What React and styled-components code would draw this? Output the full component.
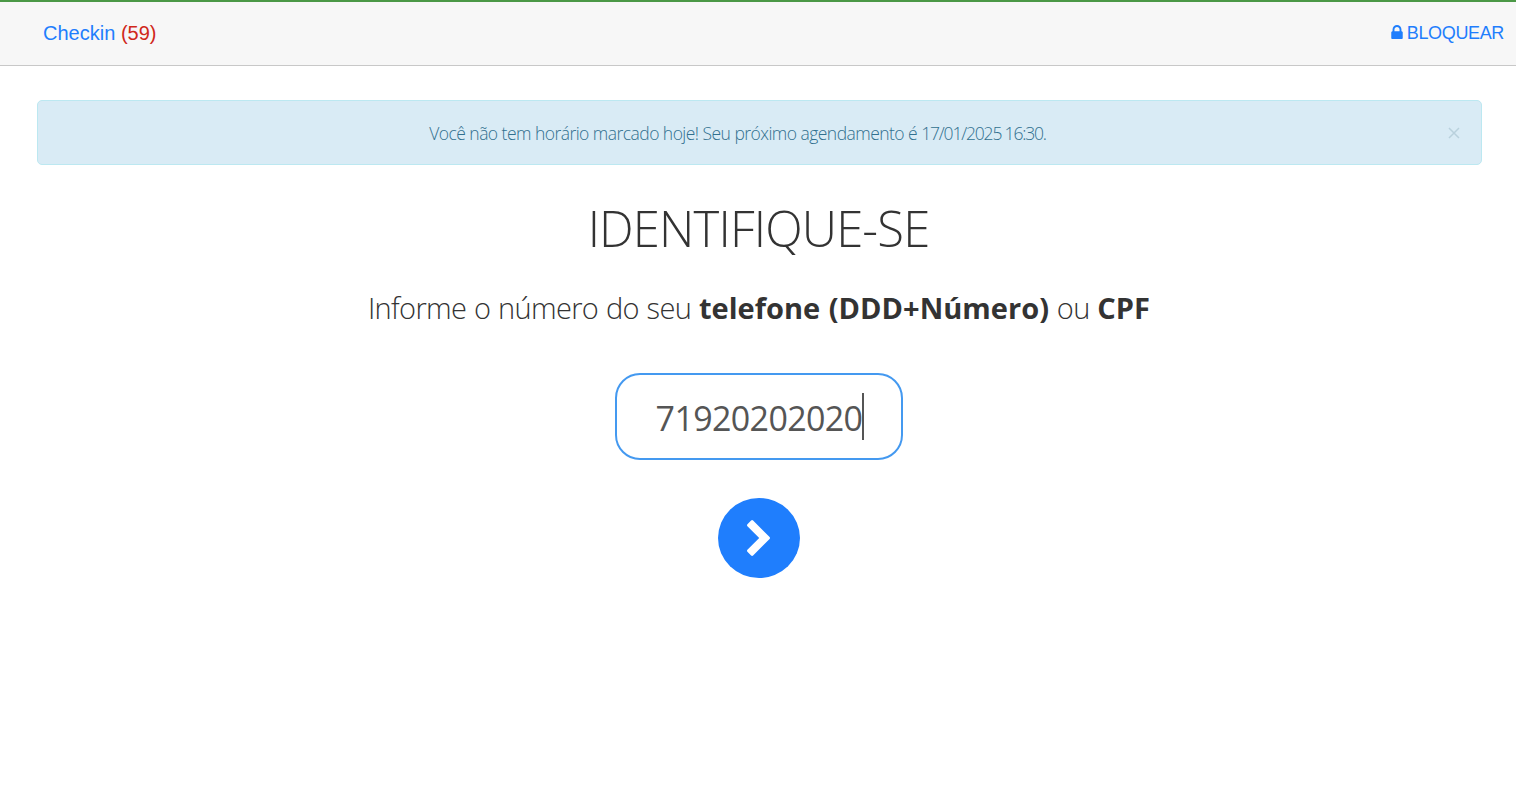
import React, { useState } from 'react';
import styled, { createGlobalStyle } from 'styled-components';

const GlobalStyle = createGlobalStyle`
  * {
    box-sizing: border-box;
  }

  body {
    margin: 0;
    background-color: #fff;
    color: #333;
    font-family: 'Open Sans', 'Noto Sans', sans-serif;
    font-weight: 300;
  }
`;

const Navbar = styled.header`
  display: flex;
  justify-content: space-between;
  height: 66px;
  padding: 0 12px 0 43px;
  background-color: #f7f7f7;
  border-top: 2px solid #4b9846;
  border-bottom: 1px solid #c8c8c8;
  font-family: 'Liberation Sans', Arial, sans-serif;
  font-weight: 400;
  line-height: 62px;
`;

const Brand = styled.a`
  color: #1f7efd;
  font-size: 20px;
  letter-spacing: 0.01px;
`;

const Count = styled.span`
  color: #d0281a;
`;

const LockLink = styled.a`
  display: flex;
  align-items: center;
  gap: 4px;
  height: 61px;
  color: #1f7efd;
  font-size: 18px;
  letter-spacing: -0.35px;

  svg {
    margin-bottom: 2px;
  }
`;

const Content = styled.main`
  padding: 34px 34px 0 37px;
`;

const Alert = styled.div`
  display: flex;
  align-items: center;
  width: 100%;
  height: 65px;
  padding: 0 19px 0 20px;
  background-color: #d9ebf5;
  border: 1px solid #bce8f1;
  border-radius: 5px;
  color: #31708f;
  font-size: 17.5px;
  letter-spacing: -0.54px;
`;

const AlertText = styled.span`
  flex: 1;
  padding-right: 29px;
  text-align: center;
  white-space: nowrap;
`;

const AlertDate = styled.span`
  letter-spacing: -1.18px;
`;

const Close = styled.button`
  display: flex;
  padding: 2px;
  border: 0;
  background: none;
  color: #b9d1dd;
`;

const Form = styled.form`
  display: flex;
  flex-direction: column;
  align-items: center;
  padding-right: 1px;
`;

const Title = styled.h1`
  margin: 30px 0 0;
  padding-right: 1px;
  font-size: 49px;
  font-weight: 300;
  line-height: 66px;
  letter-spacing: -0.85px;
  white-space: nowrap;
`;

const Subtitle = styled.p`
  margin: 27px 0 0;
  font-size: 29px;
  line-height: 40px;
  letter-spacing: -0.67px;
  word-spacing: 0.9px;
  white-space: nowrap;

  b {
    font-weight: 700;
    letter-spacing: 0.03px;
  }
`;

const Field = styled.label`
  display: flex;
  align-items: center;
  justify-content: center;
  width: 288px;
  height: 87px;
  margin-top: 45px;
  border: 2px solid #4499f0;
  border-radius: 25px;
  color: #555;
`;

const Value = styled.span`
  padding: 4px 0 0 2px;
  font-size: 34px;
  font-weight: 400;
  line-height: 47px;
  letter-spacing: -0.64px;
`;

const Caret = styled.span`
  width: 2px;
  height: 47px;
  background-color: #555;
`;

const NextButton = styled.button`
  display: flex;
  align-items: center;
  justify-content: center;
  width: 82px;
  height: 80px;
  margin-top: 38px;
  padding: 0 2px 0 0;
  border: 0;
  border-radius: 50%;
  background-color: #1f7efd;
  color: #fff;
`;

const LockIcon = () => (
  <svg width="12" height="14" viewBox="0 0 1152 1408" fill="currentColor">
    <path
      transform="matrix(1 0 0 -1 0 1408)"
      d="M320 768h512v192q0 106 -75 181t-181 75t-181 -75t-75 -181v-192zM1152 672v-576q0 -40 -28 -68t-68 -28h-960q-40 0 -68 28t-28 68v576q0 40 28 68t68 28h32v192q0 184 132 316t316 132t316 -132t132 -316v-192h32q40 0 68 -28t28 -68z"
    />
  </svg>
);

const ChevronIcon = () => (
  <svg width="23" height="36" viewBox="90 -102 1036 1612" fill="currentColor">
    <path
      transform="matrix(1 0 0 -1 0 1408)"
      d="M1107 659l-742 -742q-19 -19 -45 -19t-45 19l-166 166q-19 19 -19 45t19 45l531 531l-531 531q-19 19 -19 45t19 45l166 166q19 19 45 19t45 -19l742 -742q19 -19 19 -45t-19 -45z"
    />
  </svg>
);

const CloseIcon = () => (
  <svg width="12" height="12" viewBox="0 0 12 12" stroke="currentColor" strokeWidth="1.5">
    <path d="M1 1l10 10M11 1L1 11" />
  </svg>
);

const App = () => {
  const [showAlert, setShowAlert] = useState(true);

  return (
    <>
      <GlobalStyle />
      <Navbar>
        <Brand>
          Checkin <Count>(59)</Count>
        </Brand>
        <LockLink>
          <LockIcon />
          BLOQUEAR
        </LockLink>
      </Navbar>
      <Content>
        {showAlert && (
          <Alert>
            <AlertText>
              Você não tem horário marcado hoje! Seu próximo agendamento é{' '}
              <AlertDate>17/01/2025 16:30.</AlertDate>
            </AlertText>
            <Close onClick={() => setShowAlert(false)}>
              <CloseIcon />
            </Close>
          </Alert>
        )}
        <Form>
          <Title>IDENTIFIQUE-SE</Title>
          <Subtitle>
            Informe o número do seu <b>telefone (DDD+Número)</b> ou <b>CPF</b>
          </Subtitle>
          <Field>
            <Value>71920202020</Value>
            <Caret />
          </Field>
          <NextButton type="button">
            <ChevronIcon />
          </NextButton>
        </Form>
      </Content>
    </>
  );
};

export default App;
